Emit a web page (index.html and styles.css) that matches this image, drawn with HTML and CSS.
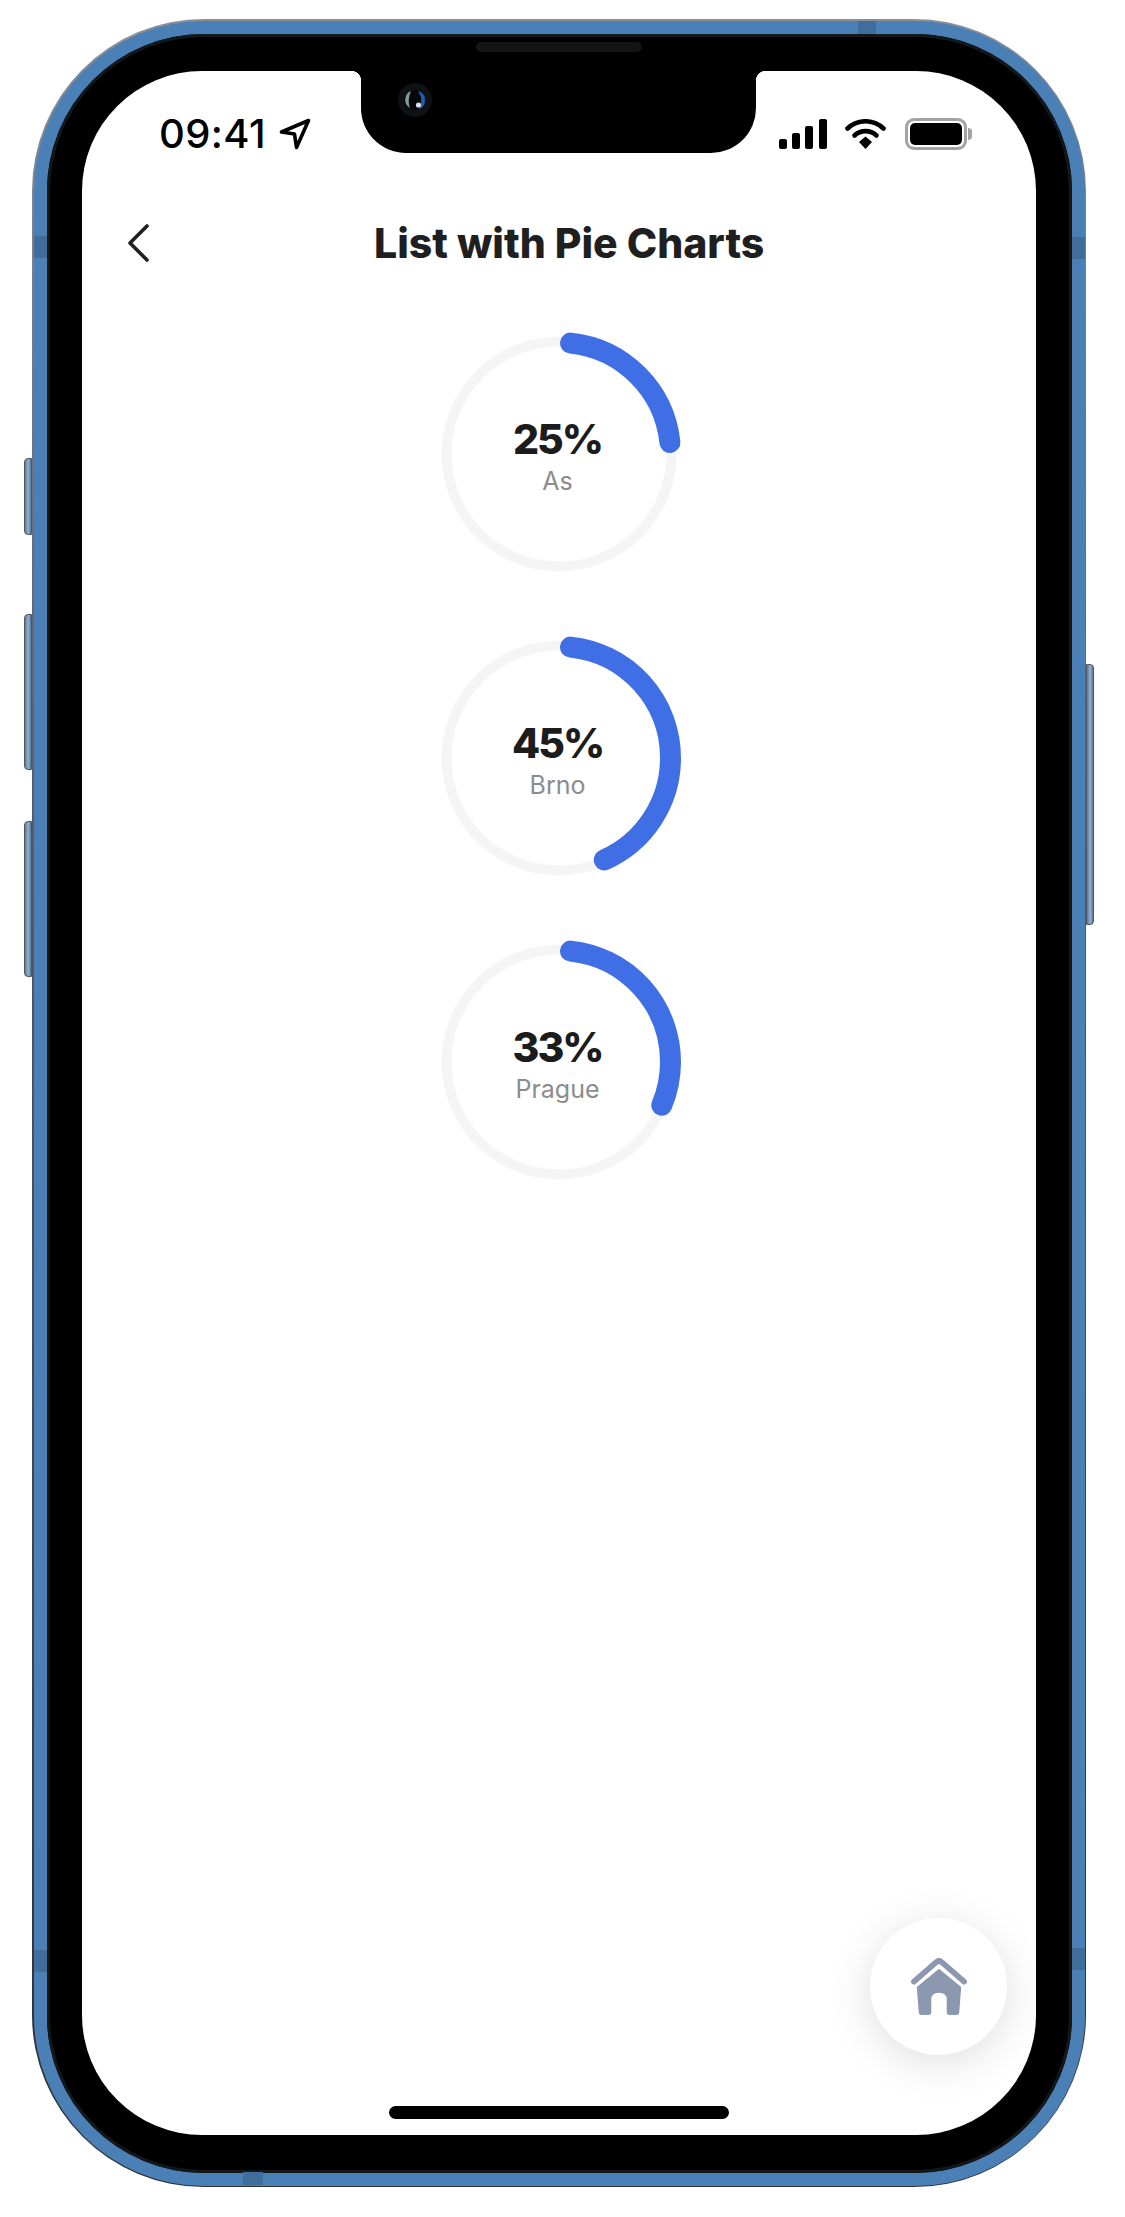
FILE: index.html
```html
<!DOCTYPE html>
<html lang="en">
<head>
    <meta charset="UTF-8">
    <meta name="viewport" content="width=device-width, initial-scale=1.0">
    <title>List with Pie Charts</title>
    <link rel="stylesheet" href="styles.css">
</head>
<body>
    <div class="phone">
        <span class="side-btn btn-silent"></span>
        <span class="side-btn btn-vol-up"></span>
        <span class="side-btn btn-vol-down"></span>
        <span class="side-btn btn-power"></span>

        <span class="band band-left-top"></span>
        <span class="band band-left-bottom"></span>
        <span class="band band-right-top"></span>
        <span class="band band-right-bottom"></span>
        <span class="band band-top"></span>
        <span class="band band-bottom"></span>

        <div class="bezel">
            <div class="glass">
                <span class="speaker"></span>
                <div class="screen">
                    <div class="notch">
                        <svg class="camera" width="34" height="34" viewBox="0 0 34 34">
                            <circle cx="17" cy="17" r="17" fill="#0e1214"/>
                            <circle cx="17" cy="17" r="10" fill="#050708"/>
                            <path d="M13 8 A9.5 9.5 0 0 0 12 25 Q9 17 13 8 Z" fill="#7f9f92"/>
                            <path d="M20 8 A9.5 9.5 0 0 1 21 26 Q26 17 20 8 Z" fill="#1f5fae"/>
                            <circle cx="20.5" cy="22" r="2.6" fill="#d8dfee"/>
                        </svg>
                    </div>

                    <div class="status-bar">
                        <div class="status-left">
                            <span class="time">09:41</span>
                            <svg class="location" width="32" height="32" viewBox="0 0 32 32">
                                <path d="M2.5 14 L29.5 2.5 L17.5 29.5 L15.5 16 Z" fill="none" stroke="#000" stroke-width="3.6" stroke-linejoin="round"/>
                            </svg>
                        </div>
                        <div class="status-right">
                            <svg width="48" height="30" viewBox="0 0 48 30">
                                <rect x="0" y="20" width="8" height="10" rx="2"/>
                                <rect x="13" y="14" width="8" height="16" rx="2"/>
                                <rect x="26" y="7" width="8" height="23" rx="2"/>
                                <rect x="40" y="0" width="8" height="30" rx="2"/>
                            </svg>
                            <svg class="wifi" width="41" height="30" viewBox="0 0 41 30">
                                <path d="M2.5 9.5 A26 26 0 0 1 38.5 9.5" fill="none" stroke="#000" stroke-width="4.6" stroke-linecap="round"/>
                                <path d="M9.5 16.5 A16 16 0 0 1 31.5 16.5" fill="none" stroke="#000" stroke-width="4.6" stroke-linecap="round"/>
                                <path d="M14 23 L20.5 17.5 L27 23 L20.5 30 Z"/>
                            </svg>
                            <div class="battery">
                                <span class="battery-body"><span class="battery-fill"></span></span>
                                <span class="battery-nub"></span>
                            </div>
                        </div>
                    </div>

                    <div class="nav">
                        <svg class="back" width="22" height="38" viewBox="0 0 22 38">
                            <path d="M20 2 L3 19 L20 36" fill="none" stroke="#1f1f1f" stroke-width="3.6" stroke-linecap="round" stroke-linejoin="round"/>
                        </svg>
                        <h1>List with Pie Charts</h1>
                    </div>

                    <ul class="charts">
                        <li class="chart">
                            <svg class="ring" viewBox="0 0 244 244">
                                <circle class="track" cx="122" cy="122" r="112.5"/>
                                <circle class="arc" cx="122" cy="122" r="111.5" pathLength="360" stroke-dasharray="78 360" stroke-dashoffset="-6"/>
                            </svg>
                            <div class="chart-text">
                                <span class="value">25%</span>
                                <span class="label">As</span>
                            </div>
                        </li>
                        <li class="chart">
                            <svg class="ring" viewBox="0 0 244 244">
                                <circle class="track" cx="122" cy="122" r="112.5"/>
                                <circle class="arc" cx="122" cy="122" r="111.5" pathLength="360" stroke-dasharray="150 360" stroke-dashoffset="-6"/>
                            </svg>
                            <div class="chart-text">
                                <span class="value">45%</span>
                                <span class="label">Brno</span>
                            </div>
                        </li>
                        <li class="chart">
                            <svg class="ring" viewBox="0 0 244 244">
                                <circle class="track" cx="122" cy="122" r="112.5"/>
                                <circle class="arc" cx="122" cy="122" r="111.5" pathLength="360" stroke-dasharray="106.8 360" stroke-dashoffset="-6"/>
                            </svg>
                            <div class="chart-text">
                                <span class="value">33%</span>
                                <span class="label">Prague</span>
                            </div>
                        </li>
                    </ul>

                    <button class="fab" type="button" aria-label="Home">
                        <svg width="56" height="58" viewBox="0 0 58 60">
                            <path d="M3 24.5 L26.5 4 Q29 2 31.5 4 L55 24.5" fill="none" stroke="#8c97b0" stroke-width="6" stroke-linecap="round" stroke-linejoin="round"/>
                            <path fill="#8c97b0" d="M29 11 L52 30 L50 56 Q49.8 59 47 59 L40 59 Q37 59 37 56 L37 43 Q37 36 29 36 Q21 36 21 43 L21 56 Q21 59 18 59 L11 59 Q8.2 59 8 56 L6 30 Z"/>
                        </svg>
                    </button>

                    <span class="home-indicator"></span>
                </div>
            </div>
        </div>
    </div>
</body>
</html>
```

FILE: styles.css
```css
body {
    font-family: Inter, "Liberation Sans", sans-serif;
    margin: 0;
    padding: 0;
    background-color: #fff;
}
.phone {
    position: relative;
    box-sizing: border-box;
    width: 1054px;
    height: 2168px;
    margin: 19px 0 0 32px;
    padding: 1.5px;
    border-radius: 172px;
    background: linear-gradient(to bottom, #8a8f96, #55595f 40%, #2c2f33);
}
.bezel {
    box-sizing: border-box;
    height: 100%;
    padding: 13px;
    border-radius: 170px;
    background-color: #4a80b6;
}
.glass {
    position: relative;
    box-sizing: border-box;
    height: 100%;
    padding: 37.5px 35.5px;
    border-radius: 157px;
    background-color: #000;
    box-shadow: inset 0 0 0 3px #15181b;
}
.screen {
    position: relative;
    box-sizing: border-box;
    height: 100%;
    border-radius: 120px;
    overflow: hidden;
    background-color: #fff;
}
.speaker {
    position: absolute;
    top: 8.5px;
    left: 50%;
    width: 166px;
    height: 10px;
    margin-left: -83px;
    border-radius: 5px;
    background-color: #141414;
}
.side-btn {
    position: absolute;
    width: 8px;
    box-sizing: border-box;
    background: linear-gradient(to right, #5c7ca0, #94b0cd 55%, #557699);
    border: 1px solid #4f555e;
}
.btn-silent {
    left: -8px;
    top: 439px;
    height: 77px;
    border-radius: 4px 0 0 4px;
}
.btn-vol-up {
    left: -8px;
    top: 595px;
    height: 156px;
    border-radius: 4px 0 0 4px;
}
.btn-vol-down {
    left: -8px;
    top: 802px;
    height: 156px;
    border-radius: 4px 0 0 4px;
}
.btn-power {
    right: -8px;
    top: 645px;
    height: 261px;
    border-radius: 0 4px 4px 0;
}
.band {
    position: absolute;
    background-color: #3f6d9c;
    z-index: 1;
}
.band-left-top, .band-left-bottom, .band-right-top, .band-right-bottom {
    width: 13px;
    height: 22px;
}
.band-left-top { left: 1.5px; top: 217px; }
.band-left-bottom { left: 1.5px; top: 1931px; }
.band-right-top { right: 1.5px; top: 218px; }
.band-right-bottom { right: 1.5px; top: 1929px; }
.band-top {
    left: 826px;
    top: 2px;
    width: 18px;
    height: 13px;
}
.band-bottom {
    left: 211px;
    bottom: 2px;
    width: 20px;
    height: 13px;
}

/* notch */
.notch {
    position: absolute;
    top: 0;
    left: 279px;
    width: 395px;
    height: 82px;
    background-color: #000;
    border-radius: 0 0 45px 45px;
}
.notch::before, .notch::after {
    content: "";
    position: absolute;
    top: 0;
    width: 10px;
    height: 10px;
}
.notch::before {
    left: -10px;
    background: radial-gradient(circle at 0 100%, transparent 10px, #000 10.5px);
}
.notch::after {
    right: -10px;
    background: radial-gradient(circle at 100% 100%, transparent 10px, #000 10.5px);
}
.camera {
    position: absolute;
    top: 12px;
    left: 37px;
}

/* status bar */
.status-bar {
    display: flex;
    justify-content: space-between;
    align-items: center;
    height: 32px;
    padding: 47px 64px 0 77px;
}
.status-left {
    display: flex;
    align-items: center;
    gap: 13px;
}
.time {
    font-size: 40px;
    font-weight: 500;
    letter-spacing: 0.4px;
    line-height: 32px;
    color: #000;
}
.location {
    display: block;
}
.status-right {
    display: flex;
    align-items: center;
    gap: 18px;
}
.status-right svg {
    display: block;
}
.wifi {
    margin-right: 1px;
}
.battery {
    display: flex;
    align-items: center;
    gap: 1px;
}
.battery-body {
    box-sizing: border-box;
    width: 62px;
    height: 32px;
    padding: 2px;
    border: 3px solid #a3a3a3;
    border-radius: 9px;
    display: block;
}
.battery-fill {
    display: block;
    height: 100%;
    border-radius: 5px;
    background-color: #000;
}
.battery-nub {
    width: 4px;
    height: 12px;
    border-radius: 0 4px 4px 0;
    background-color: #a3a3a3;
}

/* nav */
.nav {
    display: flex;
    align-items: center;
    height: 48px;
    margin-top: 69px;
    padding-left: 45px;
}
.back {
    display: block;
}
h1 {
    margin: 0 0 0 225px;
    font-size: 41px;
    font-weight: 800;
    line-height: 48px;
    white-space: nowrap;
    color: #1f1f1f;
}

/* charts */
.charts {
    list-style-type: none;
    display: flex;
    flex-direction: column;
    align-items: center;
    gap: 60px;
    margin: 0;
    padding: 65px 0 0 0;
}
.chart {
    position: relative;
    width: 244px;
    height: 244px;
}
.ring {
    display: block;
    width: 244px;
    height: 244px;
    overflow: visible;
    transform: rotate(-90deg);
}
.track {
    fill: none;
    stroke: #f5f5f5;
    stroke-width: 10;
}
.arc {
    fill: none;
    stroke: #406ee5;
    stroke-width: 21;
    stroke-linecap: round;
}
.chart-text {
    position: absolute;
    top: 0;
    left: 0;
    box-sizing: border-box;
    width: 100%;
    height: 100%;
    padding: 6px 3px 0 0;
    display: flex;
    flex-direction: column;
    align-items: center;
    justify-content: center;
}
.value {
    font-size: 41px;
    font-weight: 800;
    letter-spacing: -2px;
    line-height: 46px;
    color: #1c1c1c;
}
.label {
    font-size: 25px;
    line-height: 34px;
    color: #8c8c8c;
    margin-top: 2px;
}

/* fab + home bar */
.fab {
    position: absolute;
    right: 29px;
    bottom: 80px;
    width: 137px;
    height: 137px;
    padding: 0;
    border: none;
    border-radius: 50%;
    background-color: #fff;
    box-shadow: 0 8px 44px rgba(0, 0, 0, 0.13);
    display: flex;
    align-items: center;
    justify-content: center;
    cursor: pointer;
}
.home-indicator {
    position: absolute;
    left: 50%;
    bottom: 16px;
    width: 340px;
    height: 13px;
    margin-left: -170px;
    border-radius: 7px;
    background-color: #000;
}
```
